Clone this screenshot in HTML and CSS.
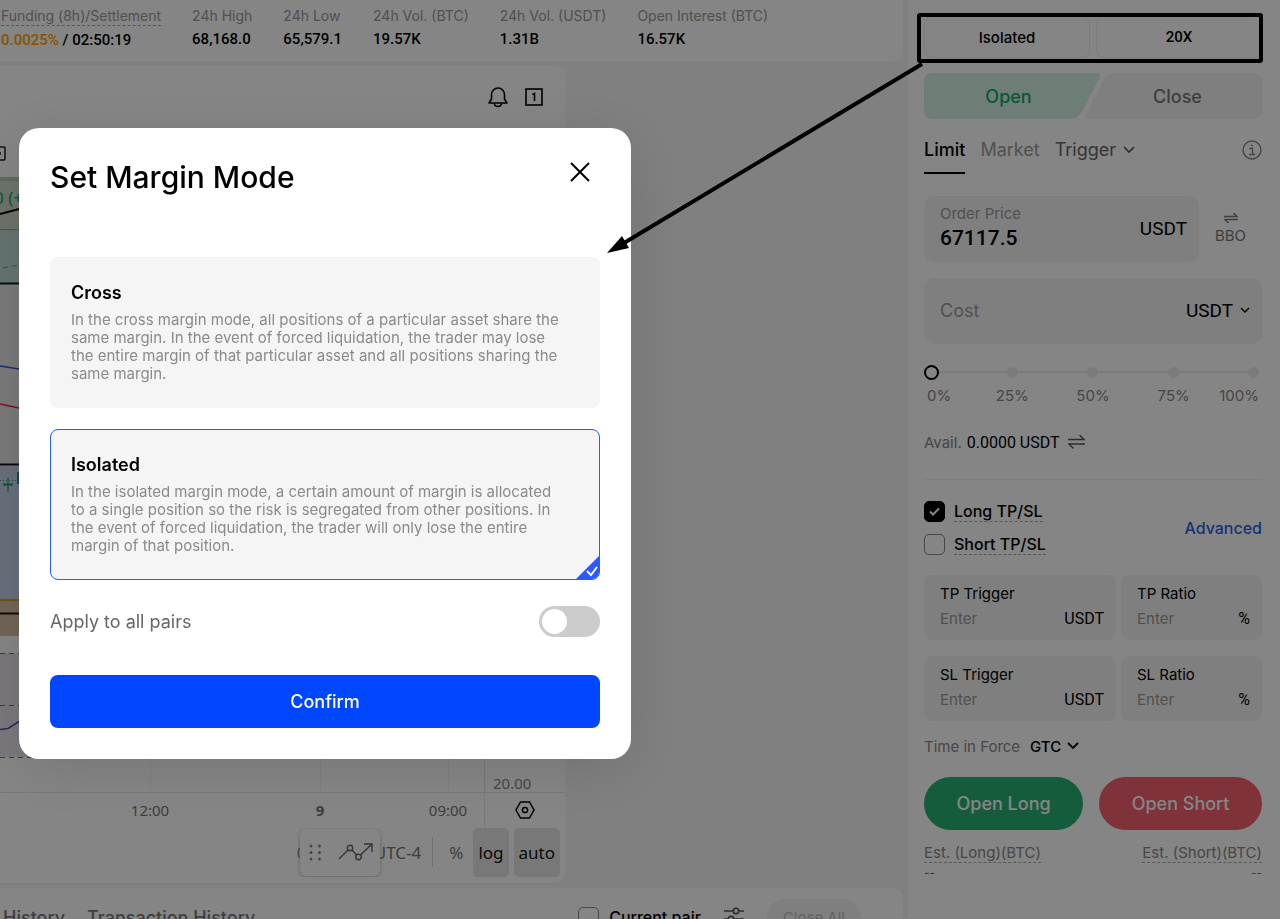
FILE: index.html
```html
<!DOCTYPE html>
<html lang="en">
<head>
    <meta charset="UTF-8">
    <meta name="viewport" content="width=device-width, initial-scale=1.0">
    <title>Futures - Set Margin Mode</title>
    <link rel="stylesheet" href="styles.css">
</head>
<body>

    <div class="page">
        <main class="main">
            <section class="ticker">
                <div class="stat"><span class="stat-label dashed">Funding (8h)/Settlement</span><span class="stat-value"><b class="orange">0.0025%</b> / 02:50:19</span></div>
                <div class="stat"><span class="stat-label">24h High</span><span class="stat-value">68,168.0</span></div>
                <div class="stat"><span class="stat-label">24h Low</span><span class="stat-value">65,579.1</span></div>
                <div class="stat"><span class="stat-label">24h Vol. (BTC)</span><span class="stat-value">19.57K</span></div>
                <div class="stat"><span class="stat-label">24h Vol. (USDT)</span><span class="stat-value">1.31B</span></div>
                <div class="stat"><span class="stat-label">Open Interest (BTC)</span><span class="stat-value">16.57K</span></div>
            </section>

            <section class="chart">
                <div class="chart-tools">
                    <button class="icon-btn" aria-label="Alerts">
                        <svg width="22" height="22" viewBox="0 0 22 22" fill="none" stroke="#000" stroke-width="1.6"><path d="M2 17h18l-2.500-4V9a6.500 7 0 0 0-13 0v4z" stroke-linejoin="round"/><path d="M7.500 17.500a3.500 3 0 0 0 7 0"/></svg>
                    </button>
                    <button class="icon-btn" aria-label="Layout">
                        <svg width="18" height="18" viewBox="0 0 18 18" fill="none" stroke="#000"><rect x="1" y="1" width="16" height="16" stroke-width="1.600"/><path d="M7.500 6.500L9.500 5.500V13" stroke-width="1.600"/></svg>
                    </button>
                </div>
                <svg class="plot" aria-hidden="true">
                    <rect x="-10" y="-31" width="15" height="13" rx="1" fill="none" stroke="#222" stroke-width="1.500"/>
                    <path d="M0 -26v3" stroke="#222" stroke-width="1.500"/>
                    <rect y="-1" width="484" height="53" fill="#d2dccb"/>
                    <rect y="-1" width="484" height="4" fill="#b5cdb5"/>
                    <rect y="51" width="484" height="54" fill="#c1dcd8"/>
                    <path d="M0 51.500H484" stroke="#82b878"/>
                    <path d="M0 36l19-5" stroke="#000" stroke-width="2"/>
                    <path d="M3 90l16-3" stroke="#888" stroke-dasharray="5 4"/>
                    <path d="M0 105.500H484" stroke="#001c18" stroke-width="2"/>
                    <rect y="107" width="484" height="179" fill="#e9e9e9"/>
                    <path d="M0 188l19 3" stroke="#3158d8" stroke-width="1.500"/>
                    <path d="M0 226l19 4" stroke="#e02844" stroke-width="1.500"/>
                    <rect y="288" width="484" height="134" fill="#c8d3ec"/>
                    <path d="M0 286.500H484" stroke="#111" stroke-width="2"/>
                    <path d="M0 302.500H484" stroke="#4a8a80" stroke-dasharray="1 2"/>
                    <path d="M8 300v14" stroke="#10a060"/>
                    <path d="M3 306.500h10M18 294v12" stroke="#10a060" stroke-width="2"/>
                    <rect y="422" width="484" height="36" fill="#d8c1a4"/>
                    <path d="M0 422H484" stroke="#d59a38" stroke-width="2"/>
                    <path d="M0 435.500H484" stroke="#2a1400" stroke-width="2"/>
                    <rect y="475" width="484" height="104" fill="#eae4ef"/>
                    <path d="M0 475.500H484M0 527.500H484M0 579.500H484" stroke="#777" stroke-dasharray="5 4"/>
                    <path d="M0 551.500l8-1 11-7" stroke="#6c46b0" stroke-width="1.500" fill="none"/>
                    <path d="M150.500 580V615M320.500 580V615M448.500 580V615" stroke="#f4f4f4"/>
                    <path d="M484.500 0V650M0 614.500H565" stroke="#e6e6e6"/>
                    <text class="legend" x="-6" y="26">0 (+</text>
                    <text class="tick" x="493" y="611">20.00</text>
                </svg>
                <div class="axis">
                    <div class="axis-times"><span>12:00</span><b>9</b><span>09:00</span></div>
                    <div class="axis-corner">
                        <svg width="20" height="18" viewBox="0 0 20 18" fill="none" stroke="#000" stroke-width="1.500"><path d="M5.500 1h9L19 9l-4.500 8h-9L1 9z"/><circle cx="10" cy="9" r="2.600"/></svg>
                    </div>
                </div>
                <div class="chart-foot">
                    <div class="clock"><span>04:10:28 (UTC-4</span>
                        <div class="float-tools">
                            <svg width="13" height="17" viewBox="0 0 13 17" fill="#8a8a8a"><circle cx="2" cy="2" r="1.500"/><circle cx="10.500" cy="2" r="1.500"/><circle cx="2" cy="8.500" r="1.500"/><circle cx="10.500" cy="8.500" r="1.500"/><circle cx="2" cy="15" r="1.500"/><circle cx="10.500" cy="15" r="1.500"/></svg>
                            <svg width="36" height="20" viewBox="0 0 36 20" fill="none" stroke="#666" stroke-width="1.400"><path d="M1 17L10 8M14 8l4.500 5M22.500 13L34 2M26 2h8v8"/><circle cx="12" cy="6" r="2.700"/><circle cx="20.500" cy="15" r="2.700"/></svg>
                        </div>
                    </div>
                    <span class="bar"></span>
                    <button class="scale">%</button>
                    <button class="scale on">log</button>
                    <button class="scale on">auto</button>
                </div>
            </section>

            <section class="orders">
                <a class="orders-tab" href="#">History</a>
                <a class="orders-tab" href="#">Transaction History</a>
                <label class="pair"><input class="check" type="checkbox">Current pair</label>
                <svg width="22" height="18" viewBox="0 0 22 18" fill="none" stroke="#555" stroke-width="1.600"><path d="M1 4h9M16 4h5M1 12h4M11 12h10"/><circle cx="13" cy="4" r="2.700"/><circle cx="8" cy="12" r="2.700"/></svg>
                <button class="close-all">Close All</button>
            </section>
        </main>

        <aside class="trade">
            <div class="modes">
                <button class="mode">Isolated</button>
                <button class="mode num">20X</button>
            </div>

            <div class="sides">
                <svg class="sides-bg" viewBox="0 0 338 46" preserveAspectRatio="none" aria-hidden="true">
                    <path d="M9 0H172q6 0 3 6L159 37q-5 9-13 9H9q-9 0-9-9V9q0-9 9-9z" fill="#d3f2e4"/>
                    <path d="M189 0H329q9 0 9 9V37q0 9-9 9H165q-5 0-2-6L179 8q4-8 10-8z" fill="#f3f3f3"/>
                </svg>
                <button class="side green">Open</button>
                <button class="side">Close</button>
            </div>

            <nav class="tabs">
                <button class="tab active">Limit</button>
                <button class="tab">Market</button>
                <label class="tab pick">
                    <select aria-label="Trigger type"><option>Trigger</option></select>
                    <svg width="12" height="8" viewBox="0 0 12 8" fill="none" stroke="#555" stroke-width="1.600"><path d="M1 1l5 5 5-5"/></svg>
                </label>
                <svg class="info" width="20" height="20" viewBox="0 0 20 20" fill="none" stroke="#888" stroke-width="1.400"><circle cx="10" cy="10" r="9"/><path d="M7.500 8.500H10.500V14M7 14.500h6M9 5.500h2"/></svg>
            </nav>

            <div class="price-row">
                <div class="field">
                    <div class="field-main">
                        <label class="muted" for="price">Order Price</label>
                        <input class="price" id="price" type="text" value="67117.5">
                    </div>
                    <span class="unit">USDT</span>
                </div>
                <button class="bbo">
                    <svg width="14" height="10" viewBox="0 0 14 10" fill="none" stroke="#777" stroke-width="1.400"><path d="M0 3.500h13L9.500 0M14 6.500H1L4.500 10"/></svg>
                    BBO
                </button>
            </div>

            <div class="field">
                <input class="cost" type="text" placeholder="Cost" aria-label="Cost">
                <label class="pick unit">
                    <select aria-label="Cost currency"><option>USDT</option></select>
                    <svg width="10" height="7" viewBox="0 0 10 7" fill="none" stroke="#000" stroke-width="1.400"><path d="M1 1l4 4 4-4"/></svg>
                </label>
            </div>

            <div class="slider">
                <div class="dots"><i></i><i></i><i></i><i></i><i></i></div>
                <input class="range" type="range" min="0" max="100" value="0" aria-label="Percent">
            </div>
            <div class="percents"><span>0%</span><span>25%</span><span>50%</span><span>75%</span><span>100%</span></div>

            <div class="avail">
                <span>Avail.</span><b>0.0000 USDT</b>
                <svg width="17" height="14" viewBox="0 0 17 14" fill="none" stroke="#555" stroke-width="1.400"><path d="M0 4.500h16L11.500 0M17 9H1l4.500 4.500"/></svg>
            </div>

            <div class="tpsl">
                <div class="tpsl-list">
                    <label class="tpsl-item"><input class="check" type="checkbox" checked><span class="dashed">Long TP/SL</span></label>
                    <label class="tpsl-item"><input class="check" type="checkbox"><span class="dashed">Short TP/SL</span></label>
                </div>
                <a class="advanced" href="#">Advanced</a>
            </div>

            <div class="limits">
                <div class="limit"><label for="tp">TP Trigger</label><div class="limit-row"><input id="tp" type="text" placeholder="Enter"><span>USDT</span></div></div>
                <div class="limit"><label for="tpr">TP Ratio</label><div class="limit-row"><input id="tpr" type="text" placeholder="Enter"><span>%</span></div></div>
                <div class="limit"><label for="sl">SL Trigger</label><div class="limit-row"><input id="sl" type="text" placeholder="Enter"><span>USDT</span></div></div>
                <div class="limit"><label for="slr">SL Ratio</label><div class="limit-row"><input id="slr" type="text" placeholder="Enter"><span>%</span></div></div>
            </div>

            <div class="force">
                <label for="tif">Time in Force</label>
                <div class="pick">
                    <select id="tif"><option>GTC</option></select>
                    <svg width="12" height="8" viewBox="0 0 12 8" fill="none" stroke="#000" stroke-width="1.800"><path d="M1 1l5 5 5-5"/></svg>
                </div>
            </div>

            <div class="actions">
                <button class="act long">Open Long</button>
                <button class="act short">Open Short</button>
            </div>

            <div class="est">
                <div><span class="dashed">Est. (Long)(BTC)</span><b class="green">--</b></div>
                <div class="right"><span class="dashed">Est. (Short)(BTC)</span><b class="red">--</b></div>
            </div>
        </aside>
    </div>

    <div class="overlay"></div>

    <form class="dialog" role="dialog" aria-labelledby="dialog-title">
        <header class="dialog-head">
            <h1 id="dialog-title">Set Margin Mode</h1>
            <button class="icon-btn" type="button" aria-label="Close">
                <svg width="20" height="20" viewBox="0 0 20 20" stroke="#000" stroke-width="2"><path d="M1 1l18 18M19 1L1 19"/></svg>
            </button>
        </header>

        <label class="option">
            <input type="radio" name="margin" value="cross">
            <strong>Cross</strong>
            <span>In the cross margin mode, all positions of a particular asset share the same margin. In the event of forced liquidation, the trader may lose the entire margin of that particular asset and all positions sharing the same margin.</span>
        </label>

        <label class="option selected">
            <input type="radio" name="margin" value="isolated" checked>
            <strong>Isolated</strong>
            <span>In the isolated margin mode, a certain amount of margin is allocated to a single position so the risk is segregated from other positions. In the event of forced liquidation, the trader will only lose the entire margin of that position.</span>
            <svg class="corner" width="23" height="23" viewBox="0 0 23 23"><path d="M23 0V23H0z" fill="#2a59ff"/><path d="M11 15l4 4 6-8" fill="none" stroke="#fff" stroke-width="2"/></svg>
        </label>

        <label class="apply">Apply to all pairs<input class="toggle" type="checkbox"></label>

        <button class="confirm" type="button">Confirm</button>
    </form>

    <svg class="pointer" width="1280" height="270" aria-hidden="true">
        <rect x="919" y="15" width="342" height="46" rx="1" fill="none" stroke="#000" stroke-width="4"/>
        <path d="M922 64L624 243" stroke="#000" stroke-width="4"/>
        <path d="M607 253l15-17 7 12z" fill="#000"/>
    </svg>

</body>
</html>
```

FILE: styles.css
```css
* {
    margin: 0;
    padding: 0;
    box-sizing: border-box;
}

body {
    height: 100vh;
    overflow: hidden;
    font-family: Inter, sans-serif;
    font-size: 16px;
    color: #000;
    background-color: #f5f5f5;
}

button,
input,
select {
    border: none;
    outline: none;
    background: none;
    font: inherit;
    color: inherit;
    appearance: none;
}

svg {
    display: block;
    flex-shrink: 0;
}

a {
    text-decoration: none;
    color: inherit;
}

b {
    font-weight: 500;
}

.page {
    height: 100%;
    display: flex;
    gap: 5px;
}

.main {
    flex: 1;
    min-width: 0;
    display: flex;
    flex-direction: column;
    gap: 5px;
}

.dashed {
    border-bottom: 1px dashed #aaa;
}

.orange {
    color: #ffa200;
}

.green {
    color: #10a866;
}

.red {
    color: #ee5566;
}

/* ticker */

.ticker {
    display: flex;
    gap: 31px;
    height: 61px;
    padding: 7px 0 0 1px;
    background-color: #fff;
    border-radius: 0 0 10px 0;
}

.stat {
    display: flex;
    flex-direction: column;
    align-items: flex-start;
    gap: 4px;
    white-space: nowrap;
}

.stat-label {
    font-size: 14px;
    line-height: 18px;
    color: #999;
}

.stat-value {
    font-family: Roboto, sans-serif;
    font-size: 15px;
    font-weight: 500;
    line-height: 20px;
}

/* chart */

.chart {
    flex: 1;
    min-height: 0;
    width: 565px;
    display: flex;
    flex-direction: column;
    background-color: #fff;
    border-radius: 0 10px 10px 0;
}

.chart-tools {
    height: 112px;
    display: flex;
    justify-content: flex-end;
    gap: 16px;
    padding: 20px 22px 0 0;
}

.icon-btn {
    display: flex;
    align-items: center;
    height: 22px;
}

.plot {
    flex: 1;
    min-height: 0;
    width: 100%;
    overflow: visible;
}

.legend {
    font: 17px "Noto Sans", sans-serif;
    fill: #10a070;
}

.tick {
    font: 15px "Noto Sans", sans-serif;
    fill: #888;
}

.axis {
    display: flex;
    height: 35px;
    font: 15px "Noto Sans", sans-serif;
    color: #777;
}

.axis b {
    font-weight: 700;
}

.axis-times {
    flex: 1;
    min-width: 0;
    display: grid;
    grid-template-columns: 170px 170px 86px;
    place-items: center;
    padding-left: 65px;
}

.axis-corner {
    width: 81px;
    display: grid;
    place-items: center;
}

.chart-foot {
    display: flex;
    align-items: center;
    justify-content: flex-end;
    gap: 5px;
    height: 56px;
    padding: 0 5px 6px 0;
    font: 17px "Noto Sans", sans-serif;
    color: #777;
}

.clock {
    position: relative;
    width: 124px;
    display: flex;
    justify-content: flex-end;
    overflow: hidden;
    white-space: nowrap;
    line-height: 49px;
}

.float-tools {
    position: absolute;
    left: 3px;
    top: 1px;
    display: flex;
    align-items: center;
    gap: 16px;
    width: 80px;
    height: 47px;
    padding-left: 9px;
    background-color: #fff;
    border-radius: 6px;
    box-shadow: 0 1px 4px #bbb;
}

.bar {
    width: 1px;
    height: 30px;
    margin: 0 6px;
    background-color: #ddd;
}

.scale {
    height: 49px;
    padding: 0 5px;
    border-radius: 5px;
}

.scale.on {
    background-color: #e6e6e6;
    color: #111;
}

/* order list */

.orders {
    display: flex;
    gap: 22px;
    height: 31px;
    padding: 19px 42px 0 3px;
    overflow: hidden;
    white-space: nowrap;
    background-color: #fff;
    border-radius: 0 10px 0 0;
}

.orders-tab {
    font-size: 18px;
    font-weight: 500;
    color: #777;
}

.pair {
    display: flex;
    gap: 10px;
    height: 21px;
    margin-left: auto;
    font-weight: 500;
}

.close-all {
    height: 36px;
    margin-top: -8px;
    padding: 0 16px;
    font-size: 15px;
    border-radius: 18px;
    color: #bbb;
    background-color: #f3f3f3;
}

.check {
    flex-shrink: 0;
    width: 21px;
    height: 21px;
    border: 1px solid #888;
    border-radius: 5px;
}

.check:checked {
    border-color: #000;
    background: #000 url("data:image/svg+xml,%3Csvg xmlns='http://www.w3.org/2000/svg' viewBox='0 0 19 19'%3E%3Cpath d='M5 9.500l3 3 6-6' fill='none' stroke='white' stroke-width='2'/%3E%3C/svg%3E");
}

/* trade panel */

.trade {
    width: 372px;
    padding: 16px 18px 0 16px;
    background-color: #fff;
}

.modes {
    display: grid;
    grid-template-columns: 1fr 1fr;
    gap: 6px;
    margin-bottom: 15px;
}

.mode {
    height: 42px;
    font-size: 15px;
    font-weight: 500;
    border: 1px solid #eee;
    border-radius: 8px;
}

.num {
    font-family: Roboto, sans-serif;
}

.sides {
    position: relative;
    display: grid;
    grid-template-columns: 1fr 1fr;
    height: 46px;
}

.sides-bg {
    position: absolute;
    width: 100%;
    height: 100%;
}

.side {
    position: relative;
    font-size: 18px;
    font-weight: 500;
    color: #777;
}

.side.green {
    color: #10a866;
}

.tabs {
    display: flex;
    align-items: center;
    gap: 15px;
    height: 55px;
    margin-bottom: 22px;
    font-size: 18px;
}

.tab {
    height: 100%;
    padding-top: 6px;
    color: #999;
    border-top: 2px solid transparent;
    border-bottom: 2px solid transparent;
}

.tab.active {
    font-weight: 500;
    color: #000;
    border-bottom-color: #000;
}

.tab.pick {
    color: #666;
}

.info {
    margin: 6px 0 0 auto;
}

.pick {
    display: flex;
    align-items: center;
    gap: 6px;
}

.price-row {
    display: grid;
    grid-template-columns: 1fr 63px;
    margin-bottom: 16px;
}

.field {
    display: flex;
    align-items: center;
    justify-content: space-between;
    height: 66px;
    padding: 0 12px 2px 16px;
    background-color: #f4f4f4;
    border-radius: 10px;
}

.field-main {
    flex: 1;
    min-width: 0;
}

.field-main label {
    display: block;
    font-size: 15px;
    line-height: 20px;
}

.muted {
    color: #999;
}

input {
    width: 100%;
    min-width: 0;
}

input::placeholder {
    color: #999;
}

.price {
    font-family: Roboto, sans-serif;
    font-size: 21px;
    font-weight: 500;
    line-height: 28px;
}

.cost {
    font-size: 18px;
}

.unit {
    font-family: Roboto, sans-serif;
    font-size: 19px;
}

.bbo {
    display: flex;
    flex-direction: column;
    align-items: center;
    justify-content: center;
    gap: 4px;
    font-size: 15px;
    line-height: 18px;
    color: #777;
}

.slider {
    position: relative;
    height: 16px;
    margin: 20px 1px 0 0;
}

.dots {
    position: absolute;
    inset: 2px;
    display: flex;
    justify-content: space-between;
    align-items: center;
    background: linear-gradient(#ececec, #ececec) center / 100% 2px no-repeat;
}

.dots i {
    width: 11px;
    height: 11px;
    border-radius: 50%;
    background-color: #ececec;
}

.range {
    position: relative;
    display: block;
    height: 16px;
}

.range::-webkit-slider-thumb {
    appearance: none;
    width: 15px;
    height: 15px;
    border: 2px solid #000;
    border-radius: 50%;
    background-color: #fff;
}

.percents {
    display: grid;
    grid-template-columns: 45px 1fr 1fr 1fr 45px;
    margin: 6px 3px 0;
    font-size: 15px;
    line-height: 20px;
    text-align: center;
    color: #888;
}

.percents :first-child {
    text-align: left;
}

.percents :last-child {
    text-align: right;
}

.avail {
    display: flex;
    align-items: center;
    gap: 5px;
    height: 74px;
    padding-bottom: 1px;
    font-size: 15px;
    color: #888;
    border-bottom: 1px solid #f2f2f2;
}

.avail b {
    margin-right: 3px;
    font-family: Roboto, sans-serif;
    font-size: 16px;
    font-weight: 400;
    color: #000;
}

.tpsl {
    display: flex;
    justify-content: space-between;
    align-items: center;
    padding: 19px 0;
    font-weight: 500;
}

.tpsl-list {
    display: grid;
    gap: 9px;
}

.tpsl-item {
    display: flex;
    align-items: center;
    gap: 9px;
    height: 24px;
}

.advanced {
    color: #2c5fe8;
}

.limits {
    display: grid;
    grid-template-columns: 192px 1fr;
    gap: 16px 5px;
    font-size: 15px;
}

.limit {
    height: 65px;
    padding: 8px 12px 0 16px;
    background-color: #f4f4f4;
    border-radius: 8px;
}

.limit label {
    display: block;
    line-height: 22px;
}

.limit-row {
    display: flex;
    line-height: 28px;
}

.limit-row span {
    font-family: Roboto, sans-serif;
    font-size: 16px;
}

.force {
    display: flex;
    align-items: center;
    gap: 10px;
    height: 20px;
    margin: 15px 0 21px;
    font-size: 15px;
    color: #888;
}

.force .pick {
    gap: 5px;
    font-weight: 500;
    color: #000;
}

.actions {
    display: flex;
    gap: 16px;
}

.act {
    flex: 1 1 auto;
    height: 53px;
    font-size: 18px;
    font-weight: 500;
    color: #fff;
    border-radius: 27px;
}

.long {
    background-color: #28b074;
}

.short {
    background-color: #f3606f;
}

.est {
    display: flex;
    justify-content: space-between;
    margin-top: 14px;
    font-size: 15px;
    line-height: 18px;
    color: #888;
}

.est b {
    display: block;
    font-size: 12px;
    line-height: 22px;
}

.right {
    text-align: right;
}

/* dialog */

.overlay {
    position: fixed;
    inset: 0;
    background-color: rgba(0, 0, 0, 0.48);
}

.dialog {
    position: fixed;
    left: 19px;
    top: 128px;
    width: 612px;
    padding: 31px;
    background-color: #fff;
    border-radius: 20px;
    box-shadow: 0 10px 60px rgba(0, 0, 0, 0.12);
}

.dialog-head {
    display: flex;
    justify-content: space-between;
    height: 98px;
    padding-right: 10px;
}

.dialog-head h1 {
    font-size: 30px;
    font-weight: 500;
    line-height: 36px;
}

.dialog-head .icon-btn {
    margin-top: 2px;
}

.option {
    position: relative;
    display: block;
    margin-bottom: 21px;
    padding: 23px 32px 24px 20px;
    background-color: #f5f5f5;
    border: 1px solid #f5f5f5;
    border-radius: 8px;
    overflow: hidden;
}

.option input {
    position: absolute;
    width: 1px;
    height: 1px;
}

.option strong {
    display: block;
    margin-bottom: 6px;
    font-size: 18px;
    font-weight: 600;
    line-height: 24px;
}

.option span {
    display: block;
    font-size: 15px;
    line-height: 18px;
    color: #8a8a8a;
}

.selected {
    border-color: #2a59ff;
}

.corner {
    position: absolute;
    right: 0;
    bottom: 0;
}

.apply {
    display: flex;
    justify-content: space-between;
    align-items: center;
    margin-top: 26px;
    margin-bottom: 38px;
    font-size: 18px;
    color: #666;
}

.toggle {
    width: 61px;
    height: 31px;
    padding: 3px;
    border-radius: 16px;
    background-color: #ccc;
}

.toggle::before {
    content: "";
    display: block;
    width: 25px;
    height: 25px;
    border-radius: 50%;
    background-color: #fff;
}

.confirm {
    display: block;
    width: 100%;
    height: 53px;
    font-size: 18px;
    font-weight: 500;
    color: #fff;
    background-color: #0046ff;
    border-radius: 8px;
}

/* frame and arrow from the mode buttons to the dialog */

.pointer {
    position: absolute;
    left: 0;
    top: 0;
    pointer-events: none;
}
```
